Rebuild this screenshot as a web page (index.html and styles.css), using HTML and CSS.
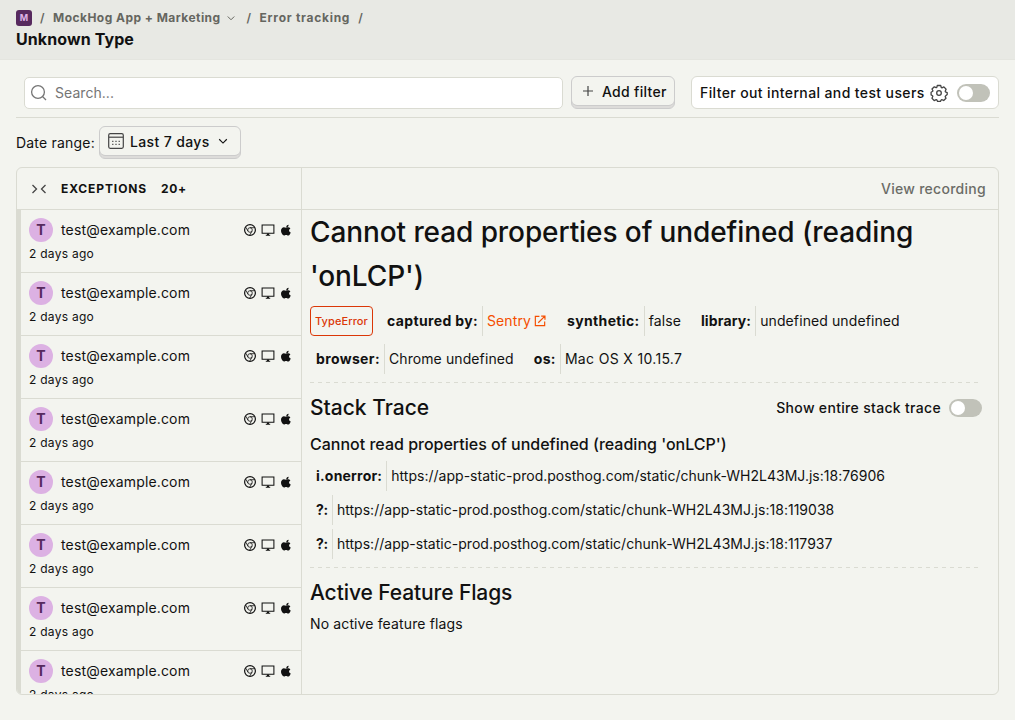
FILE: index.html
```html
<!DOCTYPE html>
<html lang="en">
<head>
<meta charset="utf-8">
<title>Unknown Type</title>
<link rel="stylesheet" href="styles.css">
</head>
<body>
<svg width="0" height="0" class="defs">
  <symbol id="chevron" viewBox="0 0 24 24"><path d="M5.500 9 12 15.500 18.500 9" fill="none" stroke="currentColor" stroke-width="2"/></symbol>
  <symbol id="chrome" viewBox="0 0 14 14"><g fill="none" stroke="currentColor"><circle cx="7" cy="7" r="5.400" stroke-width="1.200"/><g stroke-width=".8"><circle cx="7" cy="7" r="2.300"/><path d="M7 4.700h4.800M5 8.200 2.600 4M9 8.200 6.600 12.300"/></g></g></symbol>
  <symbol id="monitor" viewBox="0 0 14 14"><path d="M1.100 2h11.800v8.200H1.100z" fill="none" stroke="currentColor" stroke-width="1.050"/><path d="M6 10.500h2v1.300h1.200v1H4.800v-1H6z" fill="currentColor"/></symbol>
  <symbol id="apple" viewBox="0 0 24 24"><path fill="currentColor" transform="translate(2.400 2) scale(.85)" d="M16.500 1c.2 1.700-.4 3.100-1.300 4.100-.9 1.100-2.200 1.700-3.500 1.600-.2-1.500.5-3 1.300-4 .9-1 2.400-1.700 3.500-1.700zM21 17c-.6 1.500-1 2-1.700 3.200-1 1.500-2.300 2.800-4 2.800-1.500 0-1.900-1-3.900-1s-2.500 1-4 1c-1.700 0-3-1.500-4-3C.8 15.900.5 10.900 2.700 8.500c1.300-1.500 2.900-2.100 4.400-2.100 1.700 0 2.700 1 4.300 1 1.500 0 2.400-1 4.500-1 1.500 0 3.200.9 4.300 2.300-4 2.200-3.300 7 .8 8.300z"/></symbol>
</svg>
<header class="topbar">
  <nav class="crumbs">
    <span class="project">M</span><span class="sep">/</span>
    <span class="crumb-project">MockHog App + Marketing</span><svg class="crumb-chevron"><use href="#chevron"/></svg>
    <span class="sep">/</span><span class="crumb-page">Error tracking</span><span class="sep">/</span>
  </nav>
  <h1>Unknown Type</h1>
</header>
<main>
  <section class="filters">
    <div class="search">
      <svg viewBox="0 0 18 18"><g fill="none" stroke="currentColor" stroke-width="1.300"><circle cx="8" cy="8" r="6.400"/><path d="m12.500 12.500 3.500 3.500"/></g></svg>
      <span>Search...</span>
    </div>
    <button class="button add"><svg viewBox="0 0 12 12"><path d="M6 1v10M1 6h10" stroke="currentColor" stroke-width="1.200"/></svg>Add filter</button>
    <div class="internal">
      <span>Filter out internal and test users</span>
      <svg viewBox="0 0 18 18"><g fill="none" stroke="currentColor" stroke-width="1.300" stroke-linejoin="round"><path d="M7.300 1.500h3.400l.6 2 .6.300 2-.9 2.200 2.300-.9 2 .3.700 1.700.7v1.800l-1.700 1.500-.3.700.8 1.700-2.300 2.200-1.900-.8-.7.300-.7 1.500H7.600l-.7-1.600-.7-.2-2 .9-2.200-2.300.8-2-.2-.6-1.500-.8V8.200l1.600-.9.200-.6-.9-1.700 2.300-2.200 1.900.9.600-.3z"/><circle cx="9" cy="9" r="2.300"/></g></svg>
      <i class="toggle"></i>
    </div>
  </section>
  <section class="dates">
    <span>Date range:</span>
    <button class="button range">
      <svg class="calendar" viewBox="0 0 16 16"><rect x=".7" y=".7" width="14.600" height="14.600" rx="1.500" fill="none" stroke="currentColor" stroke-width="1.200"/><path d="M1 4.200h14" stroke="currentColor" stroke-width="1.200"/><path d="M7.400 8.300h1.200m2 0h1.200M4.200 11.400h1.200m2 0h1.200M4.200 8.300h1.200m5.200 3.100h1.200" stroke="currentColor" stroke-width="1.200"/></svg>
      Last 7 days<svg class="range-chevron"><use href="#chevron"/></svg>
    </button>
  </section>
  <section class="panel">
    <aside>
      <div class="list-head"><svg viewBox="0 0 16 10"><path d="m1.500 1 4 4-4 4M14.500 1l-4 4 4 4" fill="none" stroke="currentColor" stroke-width="1.300"/></svg><b>EXCEPTIONS</b><b>20+</b></div>
      <div class="list" id="list"></div>
    </aside>
    <article>
      <div class="detail-head">View recording</div>
      <div class="detail">
        <h2>Cannot read properties of undefined (reading 'onLCP')</h2>
        <div class="tags">
          <span class="type">TypeError</span>
          <div class="tag"><b>captured by:</b><span class="link">Sentry<svg viewBox="0 0 24 24"><path d="M11 4H4v16h16v-7M14 3.500h6.500V10M20 4 9 15" fill="none" stroke="currentColor" stroke-width="2"/></svg></span></div>
          <div class="tag"><b>synthetic:</b><span>false</span></div>
          <div class="tag library"><b>library:</b><span>undefined undefined</span></div>
          <div class="tag"><b>browser:</b><span>Chrome undefined</span></div>
          <div class="tag os"><b>os:</b><span>Mac OS X 10.15.7</span></div>
        </div>
        <div class="dash"></div>
        <div class="stack-head"><h3>Stack Trace</h3><span>Show entire stack trace</span><i class="toggle"></i></div>
        <h4>Cannot read properties of undefined (reading 'onLCP')</h4>
        <div class="frames">
          <div class="tag named"><b>i.onerror:</b><span>https://app-static-prod.posthog.com/static/chunk-WH2L43MJ.js:18:76906</span></div>
          <div class="tag"><b>?:</b><span>https://app-static-prod.posthog.com/static/chunk-WH2L43MJ.js:18:119038</span></div>
          <div class="tag"><b>?:</b><span>https://app-static-prod.posthog.com/static/chunk-WH2L43MJ.js:18:117937</span></div>
        </div>
        <div class="dash"></div>
        <h3 class="flags">Active Feature Flags</h3>
        <p>No active feature flags</p>
      </div>
    </article>
  </section>
</main>
<script src="list.js"></script>
</body>
</html>
```
FILE: styles.css
```css
* { box-sizing: border-box; }
body { margin: 0; height: 720px; overflow: hidden; background: #f3f4ef; color: #111; font: 14px/22px Inter, sans-serif; }
h1, h2, h3, h4, p { margin: 0; }
svg { flex: none; display: block; }
.defs { position: absolute; }
.topbar { height: 60px; padding: 8px 16px 0; background: #e8e9e4; border-bottom: 1px solid #e4e5df; }
.crumbs { display: flex; align-items: center; height: 20px; font-size: 12px; font-weight: 700; color: #65665f; white-space: nowrap; }
.crumb-project { letter-spacing: .46px; }
.crumb-page { letter-spacing: .73px; }
.project { width: 16px; height: 16px; border-radius: 3px; background: #572a5e; color: #deb3e6; font-size: 9px; line-height: 16px; text-align: center; }
.sep { width: 5px; margin: 0 8px; font-weight: 600; }
.crumb-chevron { width: 12px; height: 12px; margin: 0 2px 0 4px; }
h1 { font-size: 16px; font-weight: 700; line-height: 24px; margin-top: -1px; letter-spacing: .1px; }
main { padding: 0 16px; }
.filters { height: 58px; display: flex; align-items: flex-start; padding: 16px 0 0 8px; border-bottom: 1px solid #dadbd2; font-weight: 500; }
.search { width: 539px; height: 32px; margin: 1px 8px 0 0; display: flex; align-items: center; padding-left: 5px; background: #fff; border: 1px solid #dadbd2; border-radius: 5px; color: #757575; font-weight: 400; letter-spacing: .05px; }
.search svg { width: 18px; height: 18px; margin-right: 7px; }
.button { height: 33px; display: flex; align-items: center; padding: 0 8px 1px; border: 1px solid #ccc; border-radius: 6px; background: #f3f4ef; box-shadow: inset 0 -2px #dddcda, inset 0 -3px #ccc; color: #111; font: 500 14px/22px Inter, sans-serif; letter-spacing: .36px; white-space: nowrap; }
.add { width: 104px; margin-right: 16px; letter-spacing: .3px; }
.add svg { width: 12px; height: 12px; margin: 0 8px 2px 2px; color: #444; }
.internal { width: 308px; height: 33px; display: flex; align-items: center; padding: 0 8px; background: #fff; border: 1px solid #dadbd2; border-radius: 6px; white-space: nowrap; letter-spacing: .38px; }
.internal svg { width: 18px; height: 18px; margin: 0 9px 0 5px; color: #444; }
.toggle { flex: none; width: 33px; height: 18px; margin-left: auto; border-radius: 9px; background: #c1c2b9; padding: 2px; }
.toggle::before { content: ""; display: block; width: 14px; height: 14px; border-radius: 50%; background: #fff; }
.dates { height: 49px; display: flex; padding-top: 8px; gap: 4px; }
.dates > span { width: 79px; line-height: 34px; letter-spacing: .2px; white-space: nowrap; }
.range { width: 142px; }
.calendar { width: 16px; height: 16px; margin: 0 6px 2px 0; color: #444; }
.range-chevron { width: 14px; height: 14px; margin: 0 0 2px 6px; }
.panel { height: 528px; display: flex; border: 1px solid #dadbd2; border-radius: 6px; overflow: hidden; }
aside { width: 285px; flex: none; border-right: 1px solid #dadbd2; }
.list-head, .detail-head { height: 42px; display: flex; align-items: center; border-bottom: 1px solid #dadbd2; }
.list-head { padding-left: 14px; font-size: 12px; letter-spacing: .9px; }
.list-head svg { width: 16px; height: 10px; margin-right: 14px; color: #444; }
.list-head b + b { margin-left: 14px; letter-spacing: .6px; }
.list { border-left: 4px solid #dadbd2; height: 485px; overflow: hidden; }
.item { height: 63px; padding: 8px; border-bottom: 1px solid #dadbd2; }
.item-top { height: 24px; display: flex; align-items: center; letter-spacing: .16px; }
.avatar { width: 24px; height: 24px; border-radius: 50%; margin-right: 8px; background: #dcb1e3; color: #572a5e; text-align: center; font-weight: 700; line-height: 24px; }
.icons { display: flex; gap: 4px; margin-left: auto; }
.icons svg { width: 14px; height: 14px; }
.item-time { font-size: 12px; line-height: 24px; letter-spacing: .27px; }
article { flex: 1; min-width: 0; }
.detail-head { justify-content: flex-end; padding-right: 12px; font-weight: 500; letter-spacing: .28px; color: #6b6c67; }
.detail { padding: 0 16px 0 8px; }
h2 { font-size: 28px; font-weight: 500; line-height: 44px; letter-spacing: -.09px; }
.tags { display: flex; flex-wrap: wrap; gap: 8px; margin-top: 8px; }
.type { width: 63px; height: 30px; border: 1px solid #db3707; border-radius: 4px; color: #db3707; font-size: 11px; font-weight: 500; line-height: 28px; padding: 0 4px; letter-spacing: .12px; }
.tag { display: flex; height: 30px; line-height: 30px; padding: 0 6px; white-space: nowrap; }
.tag b { padding-right: 4px; }
.tag span { padding-left: 4px; border-left: 1px solid #dadbd2; }
.tags b { letter-spacing: .36px; }
.tags span { letter-spacing: .1px; }
.tags .library b { letter-spacing: .15px; }
.tags .os span { letter-spacing: .33px; }
.frames .named b { letter-spacing: .2px; }
.frames b { letter-spacing: -.3px; }
.frames span { letter-spacing: .02px; }
.tag .link { color: #f54e00; display: flex; align-items: center; }
.link svg { width: 14px; height: 14px; margin-left: 2px; }
.dash { height: 1px; margin: 8px 0; background: repeating-linear-gradient(90deg, #dadbd2 0 4px, transparent 4px 8px); }
.stack-head { height: 34px; display: flex; align-items: center; font-weight: 500; }
.stack-head span { margin: 0 8px 0 auto; letter-spacing: .32px; }
.stack-head .toggle { margin: 0; }
h3 { font-size: 21px; font-weight: 500; line-height: 34px; }
h4 { font-size: 16px; font-weight: 500; line-height: 24px; margin-top: 7px; }
.frames { display: grid; gap: 4px; margin-top: 5px; }
.flags { line-height: 33px; letter-spacing: -.1px; }
p { margin-top: 4px; letter-spacing: .13px; }
```
FILE: list.js
```js
document.getElementById('list').innerHTML = Array.from({ length: 8 }, () => `
  <div class="item">
    <div class="item-top"><span class="avatar">T</span><span>test@example.com</span>
      <span class="icons"><svg><use href="#chrome"/></svg><svg><use href="#monitor"/></svg><svg><use href="#apple"/></svg></span></div>
    <div class="item-time">2 days ago</div>
  </div>`).join('');
```
